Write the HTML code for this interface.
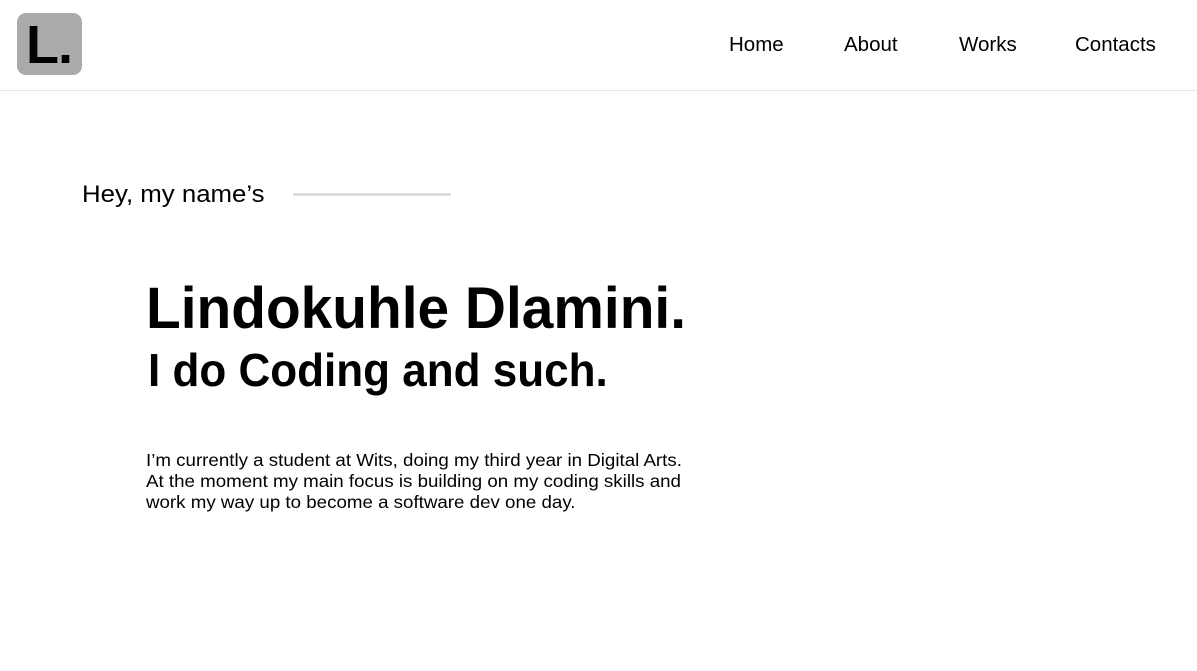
<!DOCTYPE html>
<html><head><style>
*{margin:0;padding:0;box-sizing:border-box}
body{width:1197px;height:671px;background:#fff;font-family:"Liberation Sans",sans-serif;color:#000;position:relative;overflow:hidden}
.logo{position:absolute;left:17px;top:13px;width:65px;height:62px;background:#aaa;border-radius:9px}
.logo span{position:absolute;left:9px;top:1px;font-weight:bold;font-size:54px;line-height:62px;letter-spacing:-1px}
.hdr{position:absolute;left:0;top:90px;width:1197px;height:1px;background:#e6e6e6}
.nav a{position:absolute;top:33px;font-size:20.5px;color:#000;text-decoration:none;line-height:24px}
.hey{position:absolute;left:82px;top:181px;font-size:24px;line-height:28px;transform-origin:left;transform:scaleX(1.075);white-space:nowrap}
.line{position:absolute;left:293px;top:193px;width:158px;height:3px;background:#ddd}
.h1{position:absolute;left:146px;top:276px;font-weight:bold;font-size:58px;line-height:66px;white-space:nowrap;transform-origin:left;transform:scaleX(0.98)}
.h2{position:absolute;left:148px;top:344px;font-weight:bold;font-size:46px;line-height:52px;white-space:nowrap;transform-origin:left;transform:scaleX(0.957)}
.p{position:absolute;left:146px;top:450px;font-size:17.5px;line-height:21px;width:560px;white-space:nowrap;transform-origin:left;transform:scaleX(1.07)}
</style></head><body>
<div class="logo"><span>L.</span></div>
<div class="nav"><a style="left:729px">Home</a><a style="left:844px">About</a><a style="left:959px">Works</a><a style="left:1075px">Contacts</a></div>
<div class="hdr"></div>
<div class="hey">Hey, my name’s</div>
<div class="line"></div>
<div class="h1">Lindokuhle Dlamini.</div>
<div class="h2">I do Coding and such.</div>
<div class="p">I’m currently a student at Wits, doing my third year in Digital Arts.<br>At the moment my main focus is building on my coding skills and<br>work my way up to become a software dev one day.</div>
</body></html>
